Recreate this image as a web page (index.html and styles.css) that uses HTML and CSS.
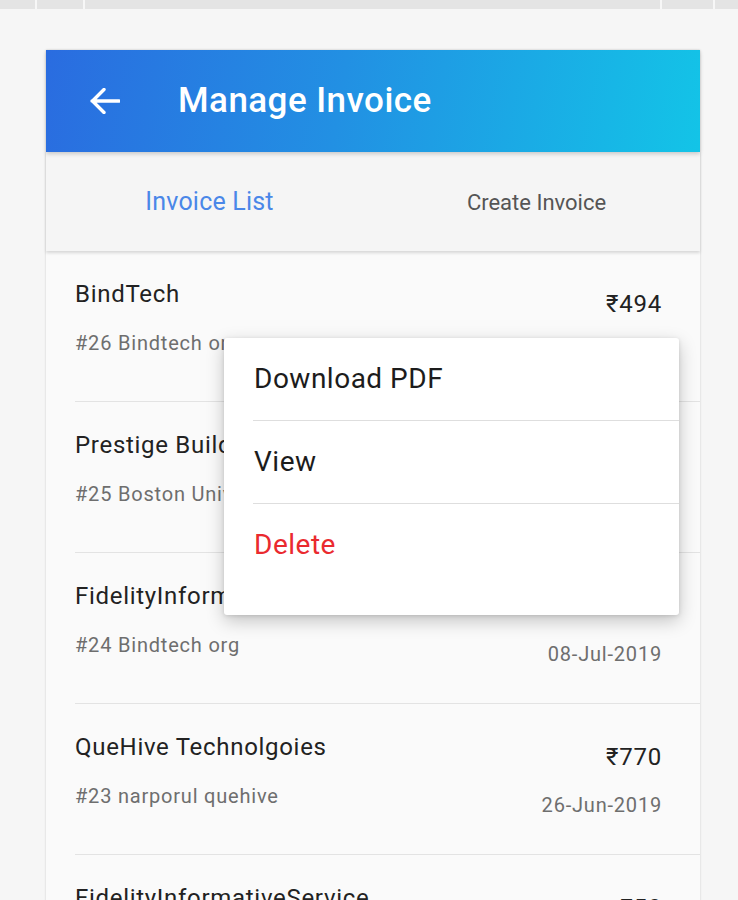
FILE: index.html
```html
<!DOCTYPE html>
<html lang="en">
<head>
<meta charset="utf-8">
<title>Manage Invoice</title>
<link rel="stylesheet" href="styles.css">
</head>
<body>
<div class="statusbar">
  <span class="tick t1"></span>
  <span class="tick t2"></span>
  <span class="spacer"></span>
  <span class="tick t3"></span>
  <span class="tick t4"></span>
</div>
<div class="screen">
  <header class="appbar">
    <svg class="back" viewBox="0 0 30 26" aria-hidden="true">
      <path d="M2 13H29M14 1.5L2.5 13L14 24.5" fill="none" stroke="#fff" stroke-width="3.4" stroke-linecap="round" stroke-linejoin="round"/>
    </svg>
    <h1 class="title">Manage Invoice</h1>
  </header>
  <nav class="tabs">
    <div class="tab tab-active">Invoice List</div>
    <div class="tab tab-idle">Create Invoice</div>
  </nav>
  <div class="list">
    <div class="row">
      <div class="col-left">
        <div class="name">BindTech</div>
        <div class="sub">#26 Bindtech org</div>
      </div>
      <div class="col-right">
        <div class="amount">₹494</div>
        <div class="date">10-Jul-2019</div>
      </div>
    </div>
    <div class="row">
      <div class="col-left">
        <div class="name">Prestige Builders</div>
        <div class="sub">#25 Boston University</div>
      </div>
      <div class="col-right">
        <div class="amount">₹1200</div>
        <div class="date">09-Jul-2019</div>
      </div>
    </div>
    <div class="row">
      <div class="col-left">
        <div class="name">FidelityInformativeService</div>
        <div class="sub">#24 Bindtech org</div>
      </div>
      <div class="col-right">
        <div class="amount">₹50</div>
        <div class="date">08-Jul-2019</div>
      </div>
    </div>
    <div class="row">
      <div class="col-left">
        <div class="name">QueHive Technolgoies</div>
        <div class="sub">#23 narporul quehive</div>
      </div>
      <div class="col-right">
        <div class="amount">₹770</div>
        <div class="date">26-Jun-2019</div>
      </div>
    </div>
    <div class="row">
      <div class="col-left">
        <div class="name">FidelityInformativeService</div>
        <div class="sub">#22 Bindtech org</div>
      </div>
      <div class="col-right">
        <div class="amount">₹50</div>
        <div class="date">20-Jun-2019</div>
      </div>
    </div>
  </div>
  <div class="menu">
    <div class="menu-item">Download PDF</div>
    <div class="menu-item">View</div>
    <div class="menu-item delete">Delete</div>
  </div>
</div>
</body>
</html>
```
FILE: styles.css
```css
* {
  box-sizing: border-box;
  margin: 0;
  padding: 0;
}

html, body {
  width: 738px;
  height: 900px;
  overflow: hidden;
}

body {
  background: #f6f6f6;
  font-family: Roboto, "Noto Sans", "DejaVu Sans", sans-serif;
}

.statusbar {
  height: 9px;
  background: #e4e4e4;
  display: flex;
}

.tick {
  width: 2px;
  background: #f7f7f7;
}

.t1 { margin-left: 35px; }
.t2 { margin-left: 46px; }
.spacer { flex: 1; }
.t4 { margin-left: 51px; margin-right: 23px; }

.screen {
  position: relative;
  margin: 41px 0 0 46px;
  width: 654px;
  box-shadow: 0 0 2px rgba(0, 0, 0, 0.18);
}

.appbar {
  position: relative;
  z-index: 2;
  height: 102px;
  display: flex;
  align-items: center;
  padding-left: 44px;
  background: linear-gradient(100deg, #2a6ce0 0%, #2290e3 45%, #13c4e7 100%);
  box-shadow: 0 2px 4px rgba(0, 0, 0, 0.18);
}

.back {
  width: 30px;
  height: 26px;
  margin-right: 58px;
  flex: none;
}

.title {
  color: #fff;
  font-size: 35px;
  font-weight: 500;
  line-height: 40px;
  letter-spacing: 0.45px;
}

.tabs {
  position: relative;
  z-index: 1;
  height: 99px;
  display: flex;
  background: #f5f5f5;
  box-shadow: 0 2px 3px rgba(0, 0, 0, 0.14);
}

.tab {
  flex: 1;
  display: flex;
  align-items: center;
  justify-content: center;
}

.tab-active {
  color: #4a87e8;
  font-size: 25px;
  letter-spacing: 0.2px;
}

.tab-idle {
  color: #555;
  font-size: 22px;
  padding-top: 2px;
}

.list {
  background: #fafafa;
}

.row {
  height: 151px;
  margin-left: 29px;
  padding-right: 38px;
  border-bottom: 1px solid #e3e3e3;
  display: flex;
  justify-content: space-between;
}

.col-left {
  padding-top: 29px;
}

.col-right {
  padding-top: 39px;
  text-align: right;
}

.name {
  font-size: 24px;
  line-height: 28px;
  letter-spacing: 0.7px;
  color: #222;
}

.sub {
  margin-top: 23px;
  font-size: 20px;
  line-height: 24px;
  letter-spacing: 0.8px;
  color: #6e6e6e;
}

.amount {
  font-size: 24px;
  line-height: 28px;
  letter-spacing: 0.8px;
  color: #222;
}

.date {
  margin-top: 22px;
  font-size: 20px;
  line-height: 24px;
  letter-spacing: 0.8px;
  color: #6e6e6e;
}

.menu {
  position: absolute;
  z-index: 5;
  left: 178px;
  top: 288px;
  width: 455px;
  padding-bottom: 29px;
  background: #fff;
  border-radius: 3px;
  box-shadow: 0 6px 18px rgba(0, 0, 0, 0.22), 0 1px 4px rgba(0, 0, 0, 0.12);
}

.menu-item {
  height: 83px;
  margin-left: 29px;
  padding: 24px 0 0 1px;
  font-size: 28px;
  line-height: 33px;
  letter-spacing: 0.5px;
  color: #1c1c1c;
  border-bottom: 1px solid #dedede;
}

.menu-item.delete {
  height: 82px;
  border-bottom: none;
  color: #ea2a2f;
}
```
